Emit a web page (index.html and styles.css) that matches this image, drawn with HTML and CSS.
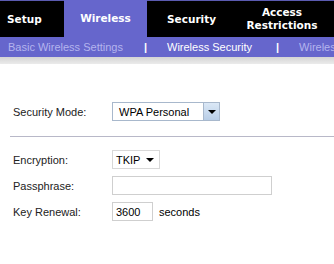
FILE: index.html
```html
<!DOCTYPE html>
<html lang="en">
<head>
  <meta charset="UTF-8">
  <title>Wireless Security</title>
  <link rel="stylesheet" href="styles.css">
</head>
<body>

  <div class="tabs">
    <a class="tab tab-setup" href="#">Setup</a>
    <a class="tab tab-wireless active" href="#">Wireless</a>
    <a class="tab tab-security" href="#">Security</a>
    <a class="tab tab-access" href="#">Access<br>Restrictions</a>
  </div>

  <div class="subnav">
    <a class="sub" href="#">Basic Wireless Settings</a>
    <span class="sep">|</span>
    <a class="sub current" href="#">Wireless Security</a>
    <span class="sep sep-last">|</span>
    <a class="sub" href="#">Wireless</a>
  </div>
  <div class="stripe"></div>

  <div class="main">
    <div class="row row-mode">
      <label class="lbl">Security Mode:</label>
      <div class="select select-mode">
        <span class="select-text">WPA Personal</span>
        <span class="select-btn"><span class="arrow"></span></span>
      </div>
    </div>

    <div class="divider"></div>

    <div class="row">
      <label class="lbl">Encryption:</label>
      <div class="select select-enc">
        <span class="select-text">TKIP</span>
        <span class="arrow"></span>
      </div>
    </div>

    <div class="row">
      <label class="lbl">Passphrase:</label>
      <div class="input input-pass"></div>
    </div>

    <div class="row">
      <label class="lbl">Key Renewal:</label>
      <div class="input input-key">3600</div>
      <span class="unit">seconds</span>
    </div>
  </div>

</body>
</html>
```

FILE: styles.css
```css
* {
  margin: 0;
  padding: 0;
  box-sizing: border-box;
}

body {
  font-family: 'Liberation Sans', Arial, sans-serif;
  font-size: 11px;
  color: #000;
  background: #fff;
  width: 334px;
  overflow: hidden;
}

.tabs {
  display: flex;
  height: 37px;
  background: #000;
  border-top: 1px solid #5a5ab0;
}

.tab {
  color: #fff;
  text-decoration: none;
  font-family: 'DejaVu Sans', Verdana, sans-serif;
  font-weight: bold;
  font-size: 10.5px;
  display: flex;
  align-items: center;
  line-height: 13px;
}

.tab-setup {
  width: 64px;
  padding-left: 7px;
}

.tab-wireless {
  width: 83px;
  justify-content: center;
  margin-top: -1px;
}

.tab-security {
  width: 83px;
  padding-left: 20px;
}

.tab-access {
  flex: 1;
  justify-content: center;
  text-align: center;
}

.active {
  background: #6666cc;
}

.subnav {
  display: flex;
  align-items: center;
  height: 20px;
  background: #6666cc;
  padding-left: 8px;
  white-space: nowrap;
  overflow: hidden;
  font-size: 11px;
}

.sub {
  color: #b4b4ee;
  text-decoration: none;
}

.sub.current {
  color: #fff;
}

.sep {
  color: #fff;
  font-weight: bold;
  margin: 0 20px 0 21px;
}

.sep-last {
  margin: 0 20px 0 24px;
}

.stripe {
  height: 7px;
  background: linear-gradient(#d4d4d4, #ebebeb);
}

.main {
  padding-top: 38px;
}

.row {
  display: flex;
  align-items: center;
  padding-left: 13px;
  margin-bottom: 7px;
}

.lbl {
  width: 99px;
  color: #222;
}

.select {
  display: flex;
  align-items: center;
  height: 19px;
  border: 1px solid #c8c8c8;
  background: #fff;
}

.select-mode {
  width: 108px;
  border-color: #a8b8cc;
}

.select-text {
  flex: 1;
  padding-left: 6px;
}

.select-btn {
  width: 16px;
  height: 17px;
  border-left: 1px solid #a8b8cc;
  background: linear-gradient(#dbe8f6, #b8cde6);
  display: flex;
  align-items: center;
  justify-content: center;
}

.arrow {
  width: 0;
  height: 0;
  border-left: 4px solid transparent;
  border-right: 4px solid transparent;
  border-top: 4px solid #000;
}

.select-enc {
  width: 48px;
  padding-right: 5px;
  border-color: #d8d8d8;
}

.select-enc .select-text {
  padding-left: 3px;
}

.divider {
  height: 1px;
  background: #b8b8c8;
  margin: 15px 0 13px 10px;
}

.input {
  height: 19px;
  border: 1px solid #cfcfcf;
  padding-left: 3px;
  display: flex;
  align-items: center;
}

.input-pass {
  width: 160px;
}

.input-key {
  width: 41px;
}

.unit {
  margin-left: 6px;
}
```
